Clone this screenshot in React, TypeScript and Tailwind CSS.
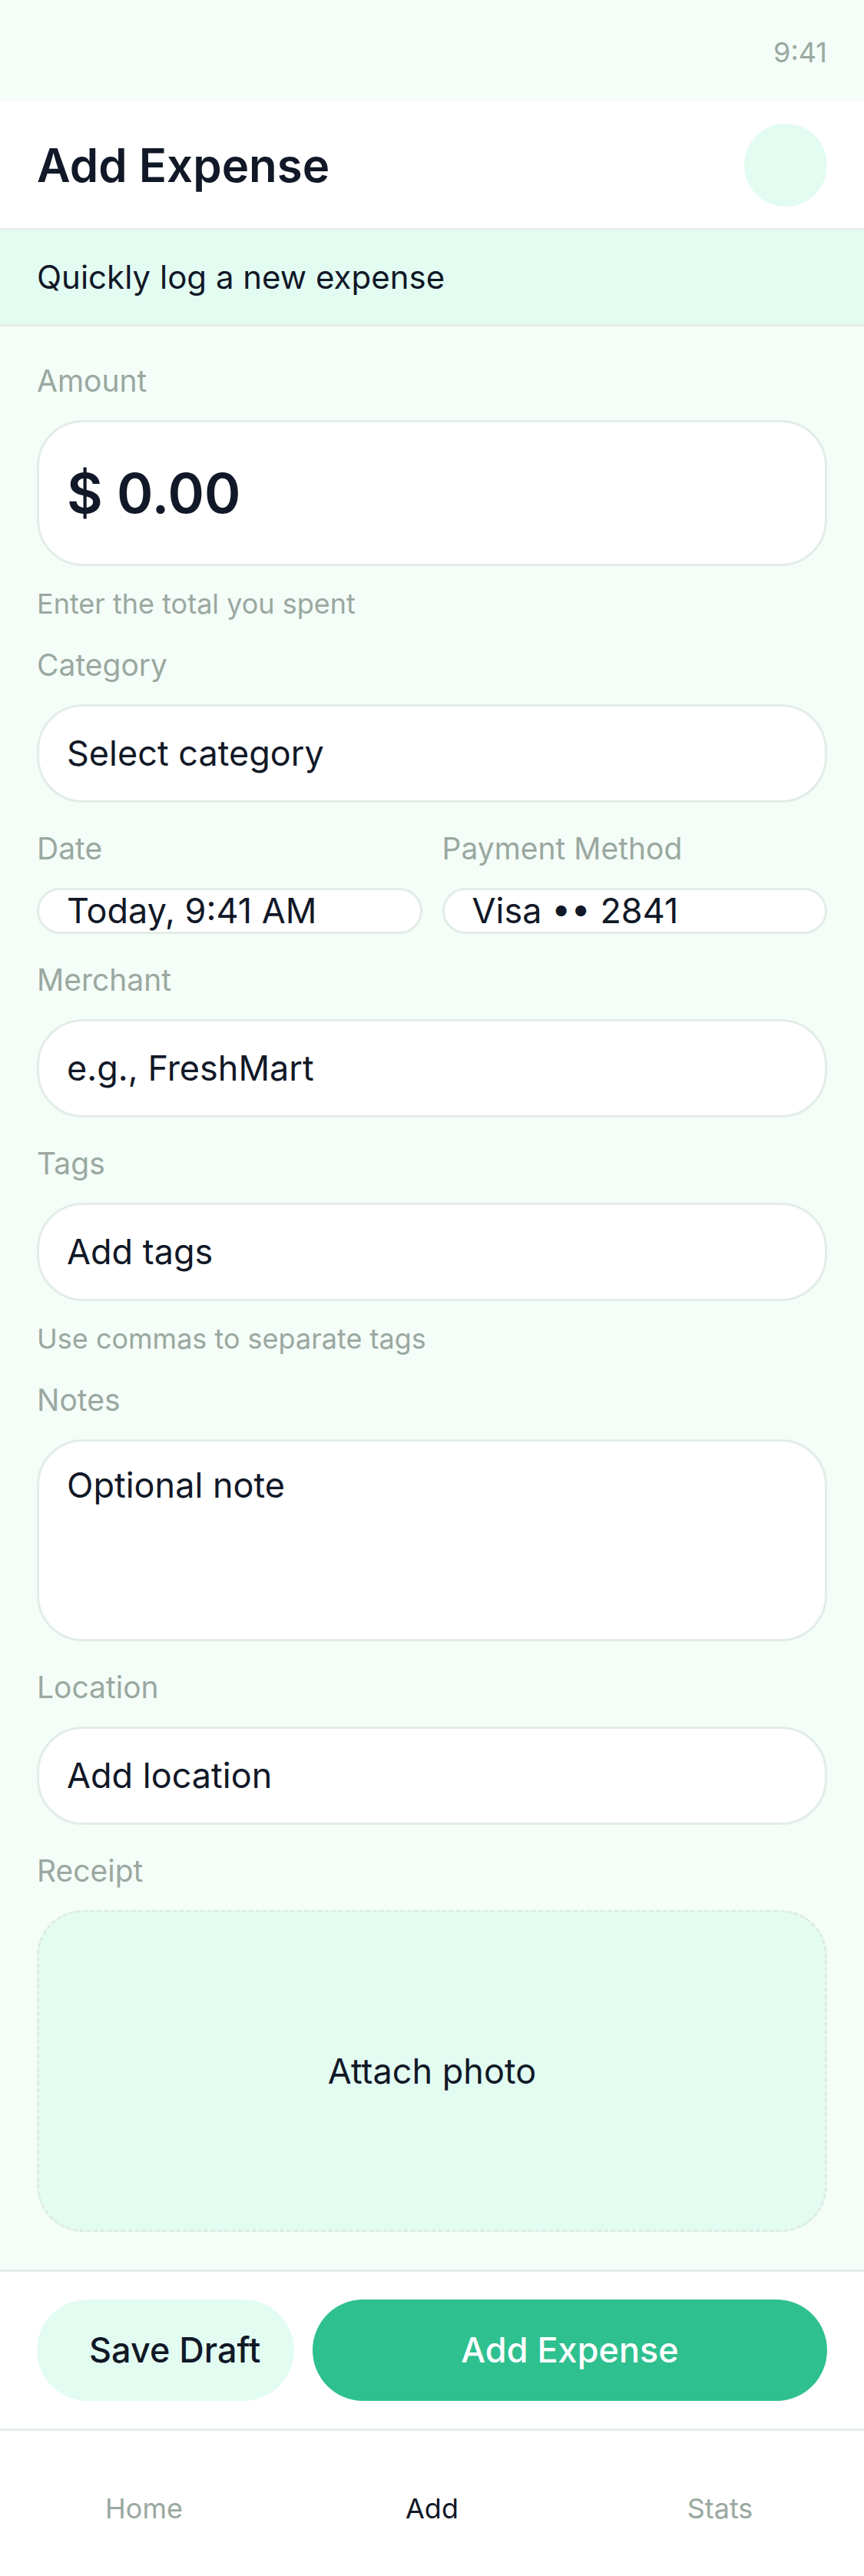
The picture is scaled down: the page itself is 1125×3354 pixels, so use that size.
import React from 'react';

const label = 'text-[39px] leading-[54px] text-[#9aa8a0]';
const box = 'rounded-[60px] border-[3px] border-[#e3ede8] bg-white px-[36px] text-[45px] leading-[54px] text-[#111827]';
const helper = 'mt-[5px] text-[36px] leading-[40px] text-[#9aa8a0]';

function Field({ title, children, hint }: { title: string; children: React.ReactNode; hint?: string }) {
  return (
    <div className="flex flex-col gap-[24px]">
      <div className={label}>{title}</div>
      {children}
      {hint && <div className={helper}>{hint}</div>}
    </div>
  );
}

export default function App() {
  return (
    <div className="flex min-h-[3354px] w-full flex-col bg-[#f4fdf8] font-[Inter,sans-serif]">
      {/* status bar */}
      <div className="flex h-[132px] items-center justify-end px-[48px] pt-[4px] text-[36px] text-[#9aa8a0]">9:41</div>

      {/* header */}
      <div className="flex items-center justify-between border-b-[3px] border-[#e8efeb] bg-white px-[48px] pt-[29px] pb-[28px]">
        <h1 className="text-[60px] font-semibold leading-[72px] text-[#111827]">Add Expense</h1>
        <div className="h-[108px] w-[108px] rounded-full bg-[#e3fcf2]" />
      </div>

      <div className="border-b-[3px] border-[#e6eeea] bg-[#e3fcf2] px-[48px] py-[36px] text-[42px] leading-[50px] text-[#111827]">
        Quickly log a new expense
      </div>

      {/* form */}
      <div className="flex flex-1 flex-col gap-[33px] px-[48px] pt-[44px] pb-[48px]">
        <Field title="Amount" hint="Enter the total you spent">
          <div className={`${box} py-[48px] text-[72px] leading-[88px] font-semibold`}>$ 0.00</div>
        </Field>

        <Field title="Category">
          <div className={`${box} py-[34px]`}>Select category</div>
        </Field>

        <div className="grid grid-cols-2 gap-x-[26px]">
          <Field title="Date">
            <div className={box}>Today, 9:41 AM</div>
          </Field>
          <Field title="Payment Method">
            <div className={box}>Visa •• 2841</div>
          </Field>
        </div>

        <Field title="Merchant">
          <div className={`${box} py-[34px]`}>e.g., FreshMart</div>
        </Field>

        <Field title="Tags" hint="Use commas to separate tags">
          <div className={`${box} py-[34px]`}>Add tags</div>
        </Field>

        <Field title="Notes">
          <div className={`${box} h-[263px] py-[30px]`}>Optional note</div>
        </Field>

        <Field title="Location">
          <div className={`${box} py-[34px]`}>Add location</div>
        </Field>

        <Field title="Receipt">
          <div className="flex h-[419px] items-center justify-center rounded-[60px] border-[3px] border-dashed border-[#dfebe5] bg-[#e3fcf2] text-[45px] leading-[54px] text-[#111827]">
            Attach photo
          </div>
        </Field>
      </div>

      {/* actions */}
      <div className="flex gap-[24px] border-y-[3px] border-[#e6eeea] bg-white px-[48px] py-[36px]">
        <button className="h-[132px] w-[335px] rounded-full bg-[#e3fcf2] pl-[68px] text-left text-[45px] font-medium text-[#111827]">Save Draft</button>
        <button className="h-[132px] flex-1 rounded-full bg-[#2fc08f] text-[45px] font-medium text-white">Add Expense</button>
      </div>

      {/* tab bar */}
      <div className="grid h-[189px] grid-cols-3 bg-white pt-[77px] text-[36px] leading-[48px]">
        <div className="text-center text-[#9aa8a0]">Home</div>
        <div className="text-center text-[#111827]">Add</div>
        <div className="text-center text-[#9aa8a0]">Stats</div>
      </div>
    </div>
  );
}
